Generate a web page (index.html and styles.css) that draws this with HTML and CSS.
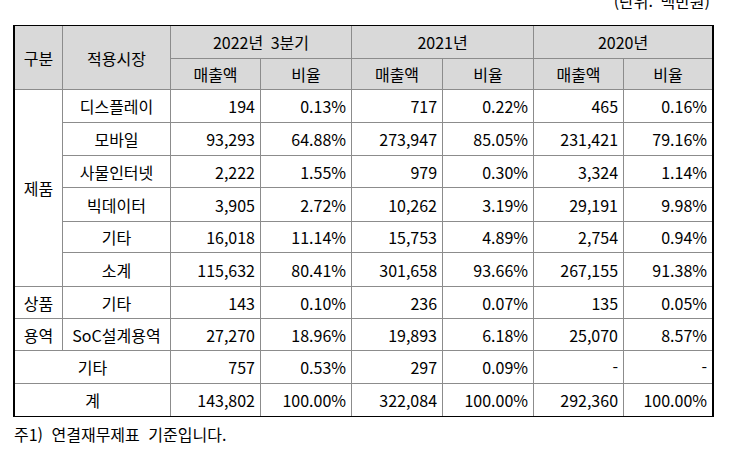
FILE: index.html
```html
<!DOCTYPE html>
<html lang="ko">
<head>
<meta charset="utf-8">
<title>적용시장별 매출</title>
<link rel="stylesheet" href="styles.css">
</head>
<body>
<div class="page">
  <div class="unit">(단위: 백만원)</div>
  <table class="sales">
    <colgroup>
      <col class="c1"><col class="c2"><col class="c3"><col class="c4"><col class="c5"><col class="c6"><col class="c7"><col class="c8">
    </colgroup>
    <thead>
      <tr class="h1">
        <th rowspan="2">구분</th>
        <th rowspan="2">적용시장</th>
        <th colspan="2">2022년 3분기</th>
        <th colspan="2">2021년</th>
        <th colspan="2" class="last">2020년</th>
      </tr>
      <tr class="h2">
        <th>매출액</th><th>비율</th>
        <th>매출액</th><th>비율</th>
        <th>매출액</th><th class="last">비율</th>
      </tr>
    </thead>
    <tbody>
      <tr class="ra">
        <td rowspan="6" class="cat">제품</td>
        <td class="mk">디스플레이</td>
        <td class="n">194</td><td class="n">0.13%</td>
        <td class="n">717</td><td class="n">0.22%</td>
        <td class="n">465</td><td class="n last">0.16%</td>
      </tr>
      <tr class="ra">
        <td class="mk">모바일</td>
        <td class="n">93,293</td><td class="n">64.88%</td>
        <td class="n">273,947</td><td class="n">85.05%</td>
        <td class="n">231,421</td><td class="n last">79.16%</td>
      </tr>
      <tr class="rb">
        <td class="mk">사물인터넷</td>
        <td class="n">2,222</td><td class="n">1.55%</td>
        <td class="n">979</td><td class="n">0.30%</td>
        <td class="n">3,324</td><td class="n last">1.14%</td>
      </tr>
      <tr class="rc">
        <td class="mk">빅데이터</td>
        <td class="n">3,905</td><td class="n">2.72%</td>
        <td class="n">10,262</td><td class="n">3.19%</td>
        <td class="n">29,191</td><td class="n last">9.98%</td>
      </tr>
      <tr class="rd">
        <td class="mk">기타</td>
        <td class="n">16,018</td><td class="n">11.14%</td>
        <td class="n">15,753</td><td class="n">4.89%</td>
        <td class="n">2,754</td><td class="n last">0.94%</td>
      </tr>
      <tr class="rc">
        <td class="mk">소계</td>
        <td class="n">115,632</td><td class="n">80.41%</td>
        <td class="n">301,658</td><td class="n">93.66%</td>
        <td class="n">267,155</td><td class="n last">91.38%</td>
      </tr>
      <tr class="rb">
        <td class="cat">상품</td>
        <td class="mk">기타</td>
        <td class="n">143</td><td class="n">0.10%</td>
        <td class="n">236</td><td class="n">0.07%</td>
        <td class="n">135</td><td class="n last">0.05%</td>
      </tr>
      <tr class="rb">
        <td class="cat">용역</td>
        <td class="mk">SoC설계용역</td>
        <td class="n">27,270</td><td class="n">18.96%</td>
        <td class="n">19,893</td><td class="n">6.18%</td>
        <td class="n">25,070</td><td class="n last">8.57%</td>
      </tr>
      <tr class="ra">
        <td colspan="2" class="mk">기타</td>
        <td class="n">757</td><td class="n">0.53%</td>
        <td class="n">297</td><td class="n">0.09%</td>
        <td class="n">-</td><td class="n last">-</td>
      </tr>
      <tr class="rb end">
        <td colspan="2" class="mk">계</td>
        <td class="n">143,802</td><td class="n">100.00%</td>
        <td class="n">322,084</td><td class="n">100.00%</td>
        <td class="n">292,360</td><td class="n last">100.00%</td>
      </tr>
    </tbody>
  </table>
  <p class="note">주1) 연결재무제표 기준입니다.</p>
</div>
</body>
</html>
```

FILE: styles.css
```css
* { box-sizing: border-box; }

html, body {
  margin: 0;
  padding: 0;
  background: #ffffff;
}

body {
  font-family: "Noto Sans CJK KR", "Noto Sans", sans-serif;
  font-size: 16px;
  color: #000000;
  overflow: hidden;
}

.page {
  padding-left: 13px;
  width: 746px;
}

.unit {
  width: 701px;
  text-align: right;
  padding-right: 4px;
  height: 18px;
  line-height: 18px;
  margin-top: -8px;
  margin-bottom: 15px;
  word-spacing: 3px;
}

.sales {
  table-layout: fixed;
  width: 701px;
  border-collapse: separate;
  border-spacing: 0;
  border-top: 1px solid #000;
  border-bottom: 1px solid #000;
  border-left: 2px solid #000;
  border-right: 2px solid #000;
}

.c1 { width: 48px; }
.c2 { width: 108px; }
.c3 { width: 90px; }
.c4 { width: 91px; }
.c5 { width: 91px; }
.c6 { width: 91px; }
.c7 { width: 90px; }
.c8 { width: 88px; }

.sales th,
.sales td {
  padding: 0 5px;
  border-right: 1px solid #8c8c8c;
  border-bottom: 1px solid #8c8c8c;
  line-height: 18px;
  white-space: nowrap;
  overflow: hidden;
}

.sales .last { border-right: none; }
.sales tr.end td { border-bottom: none; }

.sales th {
  background: #d9d9d9;
  font-weight: normal;
  text-align: center;
  word-spacing: 3px;
}

.h1 { height: 33px; }
.h2 { height: 31px; }
.ra { height: 33px; }
.rb { height: 32px; }
.rc { height: 34px; }
.rd { height: 31px; }
.end { height: 32px; }

.cat,
.mk { text-align: center; }

.n { text-align: right; }

.note {
  margin: 8px 0 0 1px;
  line-height: 18px;
  word-spacing: 4px;
}
```
